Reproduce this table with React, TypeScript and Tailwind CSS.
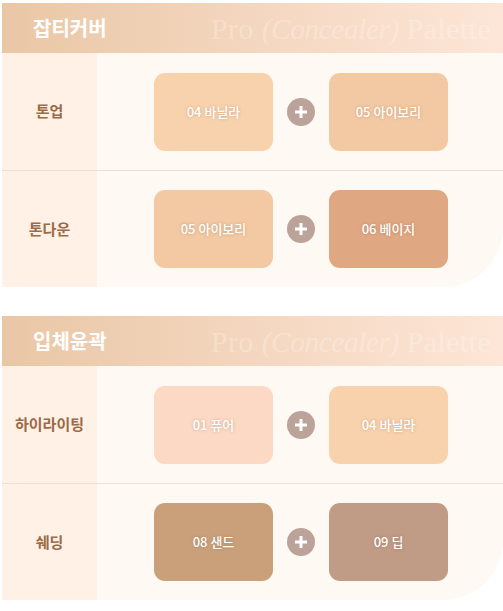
const font = { fontFamily: '"Noto Sans CJK KR", "Noto Sans", sans-serif' };

type Row = { label: string; left: [string, string]; right: [string, string] };

const sections: { title: string; rows: Row[] }[] = [
  {
    title: "잡티커버",
    rows: [
      { label: "톤업", left: ["04 바닐라", "bg-[#f8d2ad]"], right: ["05 아이보리", "bg-[#f2c9a2]"] },
      { label: "톤다운", left: ["05 아이보리", "bg-[#f2c9a2]"], right: ["06 베이지", "bg-[#dfa882]"] },
    ],
  },
  {
    title: "입체윤곽",
    rows: [
      { label: "하이라이팅", left: ["01 퓨어", "bg-[#fcd9c4]"], right: ["04 바닐라", "bg-[#f8d2ad]"] },
      { label: "쉐딩", left: ["08 샌드", "bg-[#c9a07a]"], right: ["09 딥", "bg-[#c09b86]"] },
    ],
  },
];

function Swatch({ name, color }: { name: string; color: string }) {
  return (
    <div
      className={`flex h-[78px] w-[119px] items-center justify-center rounded-[11px] ${color} text-[13px] font-medium text-white [text-shadow:0_0_3px_rgba(120,70,40,0.35)]`}
    >
      {name}
    </div>
  );
}

function Plus() {
  return (
    <div className="flex h-[28px] w-[28px] items-center justify-center rounded-full bg-[#bba39a]">
      <svg width="16" height="16" viewBox="0 0 16 16">
        <path d="M8 2v12M2 8h12" stroke="white" strokeWidth="3" />
      </svg>
    </div>
  );
}

function Section({ title, rows }: { title: string; rows: Row[] }) {
  return (
    <section className="overflow-hidden rounded-br-[60px] bg-[#fef9f3]">
      <div className="flex h-[50px] items-center bg-[linear-gradient(90deg,#e9c7a5_0%,#f3d5bd_45%,#fde6d7_100%)]">
        <h2 className="w-[209px] pl-[31px] text-[20px] font-bold text-white">{title}</h2>
        <p
          className="whitespace-nowrap pt-[4px] text-[29.5px] leading-none tracking-[0.6px] text-white/25"
          style={{ fontFamily: '"Liberation Serif", serif' }}
        >
          Pro <span className="italic tracking-[-0.5px]">(Concealer)</span> Palette
        </p>
      </div>
      {rows.map((r, i) => (
        <div key={r.label} className={`flex h-[117px] ${i > 0 ? "border-t border-[#ece0d2]" : ""}`}>
          <div className="flex w-[95px] items-center justify-center bg-[#fff1e5] text-[15px] font-bold text-[#9b6a47]">
            {r.label}
          </div>
          <div className="flex flex-1 items-center justify-center gap-[14px] pl-[2px]">
            <Swatch name={r.left[0]} color={r.left[1]} />
            <Plus />
            <Swatch name={r.right[0]} color={r.right[1]} />
          </div>
        </div>
      ))}
    </section>
  );
}

export default function App() {
  return (
    <main className="flex h-[611px] w-[503px] flex-col gap-[29px] bg-white pl-[2px] pt-[3px]" style={font}>
      {sections.map((s) => (
        <Section key={s.title} title={s.title} rows={s.rows} />
      ))}
    </main>
  );
}
